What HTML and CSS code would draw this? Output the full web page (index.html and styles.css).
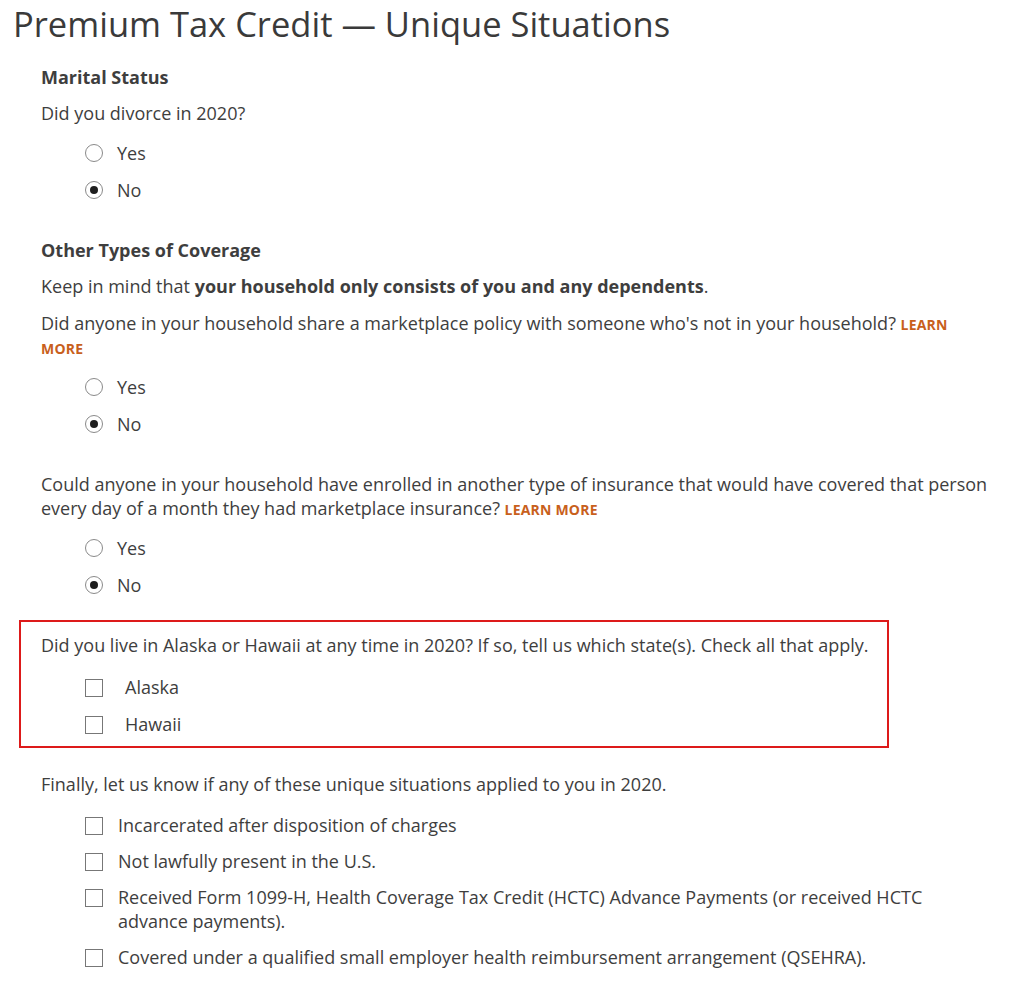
FILE: index.html
```html
<!DOCTYPE html>
<html lang="en">
<head>
    <meta charset="UTF-8">
    <meta name="viewport" content="width=device-width, initial-scale=1.0">
    <title>Premium Tax Credit — Unique Situations</title>
    <link rel="stylesheet" href="styles.css">
</head>
<body>
    <h1 class="page-title">Premium Tax Credit — Unique Situations</h1>

    <div class="form">
        <!-- Marital status -->
        <section class="group">
            <h2 class="group-title">Marital Status</h2>
            <p class="question">Did you divorce in 2020?</p>
            <ul class="options">
                <li class="option"><span class="radio"></span>Yes</li>
                <li class="option"><span class="radio checked"></span>No</li>
            </ul>
        </section>

        <!-- Coverage -->
        <section class="group">
            <h2 class="group-title">Other Types of Coverage</h2>
            <p class="question">Keep in mind that <strong>your household only consists of you and any dependents</strong>.</p>
            <p class="question">Did anyone in your household share a marketplace policy with someone who's not in your household? <a class="learn-more" href="#">Learn more</a></p>
            <ul class="options">
                <li class="option"><span class="radio"></span>Yes</li>
                <li class="option"><span class="radio checked"></span>No</li>
            </ul>
        </section>

        <section class="group">
            <p class="question">Could anyone in your household have enrolled in another type of insurance that would have covered that person every day of a month they had marketplace insurance? <a class="learn-more" href="#">Learn more</a></p>
            <ul class="options">
                <li class="option"><span class="radio"></span>Yes</li>
                <li class="option"><span class="radio checked"></span>No</li>
            </ul>
        </section>

        <section class="group highlight">
            <p class="question">Did you live in Alaska or Hawaii at any time in 2020? If so, tell us which state(s). Check all that apply.</p>
            <ul class="checks states">
                <li class="check"><span class="box"></span>Alaska</li>
                <li class="check"><span class="box"></span>Hawaii</li>
            </ul>
        </section>

        <section class="group">
            <p class="question">Finally, let us know if any of these unique situations applied to you in 2020.</p>
            <ul class="checks">
                <li class="check"><span class="box"></span>Incarcerated after disposition of charges</li>
                <li class="check"><span class="box"></span>Not lawfully present in the U.S.</li>
                <li class="check"><span class="box"></span>Received Form 1099-H, Health Coverage Tax Credit (HCTC) Advance Payments (or received HCTC advance payments).</li>
                <li class="check"><span class="box"></span>Covered under a qualified small employer health reimbursement arrangement (QSEHRA).</li>
            </ul>
        </section>
    </div>
</body>
</html>
```

FILE: styles.css
```css
body {
    font-family: 'Open Sans', 'Noto Sans', sans-serif;
    color: #3e3e3e;
    background: #ffffff;
    margin: 0;
    padding: 0;
    font-size: 18px;
}
.page-title {
    font-size: 34.5px;
    font-weight: 400;
    color: #3a3a3a;
    margin: 0;
    padding: 2px 0 0 13px;
    line-height: 44px;
}
.form {
    padding: 19px 0 0 41px;
    width: 949px;
}
.group {
    margin: 0 0 36px;
}
.group-title {
    font-size: 18px;
    font-weight: 700;
    margin: 0 0 12px;
    line-height: 24px;
}
.question {
    margin: 0 0 13px;
    line-height: 24px;
}
.question strong {
    font-weight: 700;
}
.learn-more {
    color: #c8601c;
    text-transform: uppercase;
    font-size: 14px;
    line-height: 1;
    font-weight: 700;
    letter-spacing: 0.2px;
    text-decoration: none;
}
.options,
.checks {
    list-style: none;
    margin: 16px 0 0;
    padding: 0 0 0 44px;
}
.checks {
    margin-top: 17px;
}
.option {
    display: flex;
    align-items: center;
    height: 24px;
    margin-bottom: 13px;
}
.radio {
    width: 18px;
    height: 18px;
    box-sizing: border-box;
    border: 1.5px solid #8a8a8a;
    border-radius: 50%;
    margin-right: 14px;
    display: flex;
    align-items: center;
    justify-content: center;
}
.radio.checked::after {
    content: "";
    width: 8px;
    height: 8px;
    border-radius: 50%;
    background: #1e1e1e;
}
.check {
    display: flex;
    align-items: flex-start;
    line-height: 24px;
    margin-bottom: 12px;
    padding-right: 50px;
}
.box {
    flex: none;
    width: 18px;
    height: 18px;
    box-sizing: border-box;
    border: 1.5px solid #777;
    margin: 4px 15px 0 0;
}

/* red outline around the Alaska / Hawaii question */
.highlight {
    border: 2px solid #dd1a1a;
    margin: -13px 0 24px -22px;
    width: 870px;
    box-sizing: border-box;
    padding: 11px 0 0 20px;
}
.checks.states {
    margin-top: 18px;
}
.states .check {
    margin-bottom: 13px;
}
.states .check:last-child {
    margin-bottom: 10px;
}
.states .box {
    margin-right: 22px;
}
```
